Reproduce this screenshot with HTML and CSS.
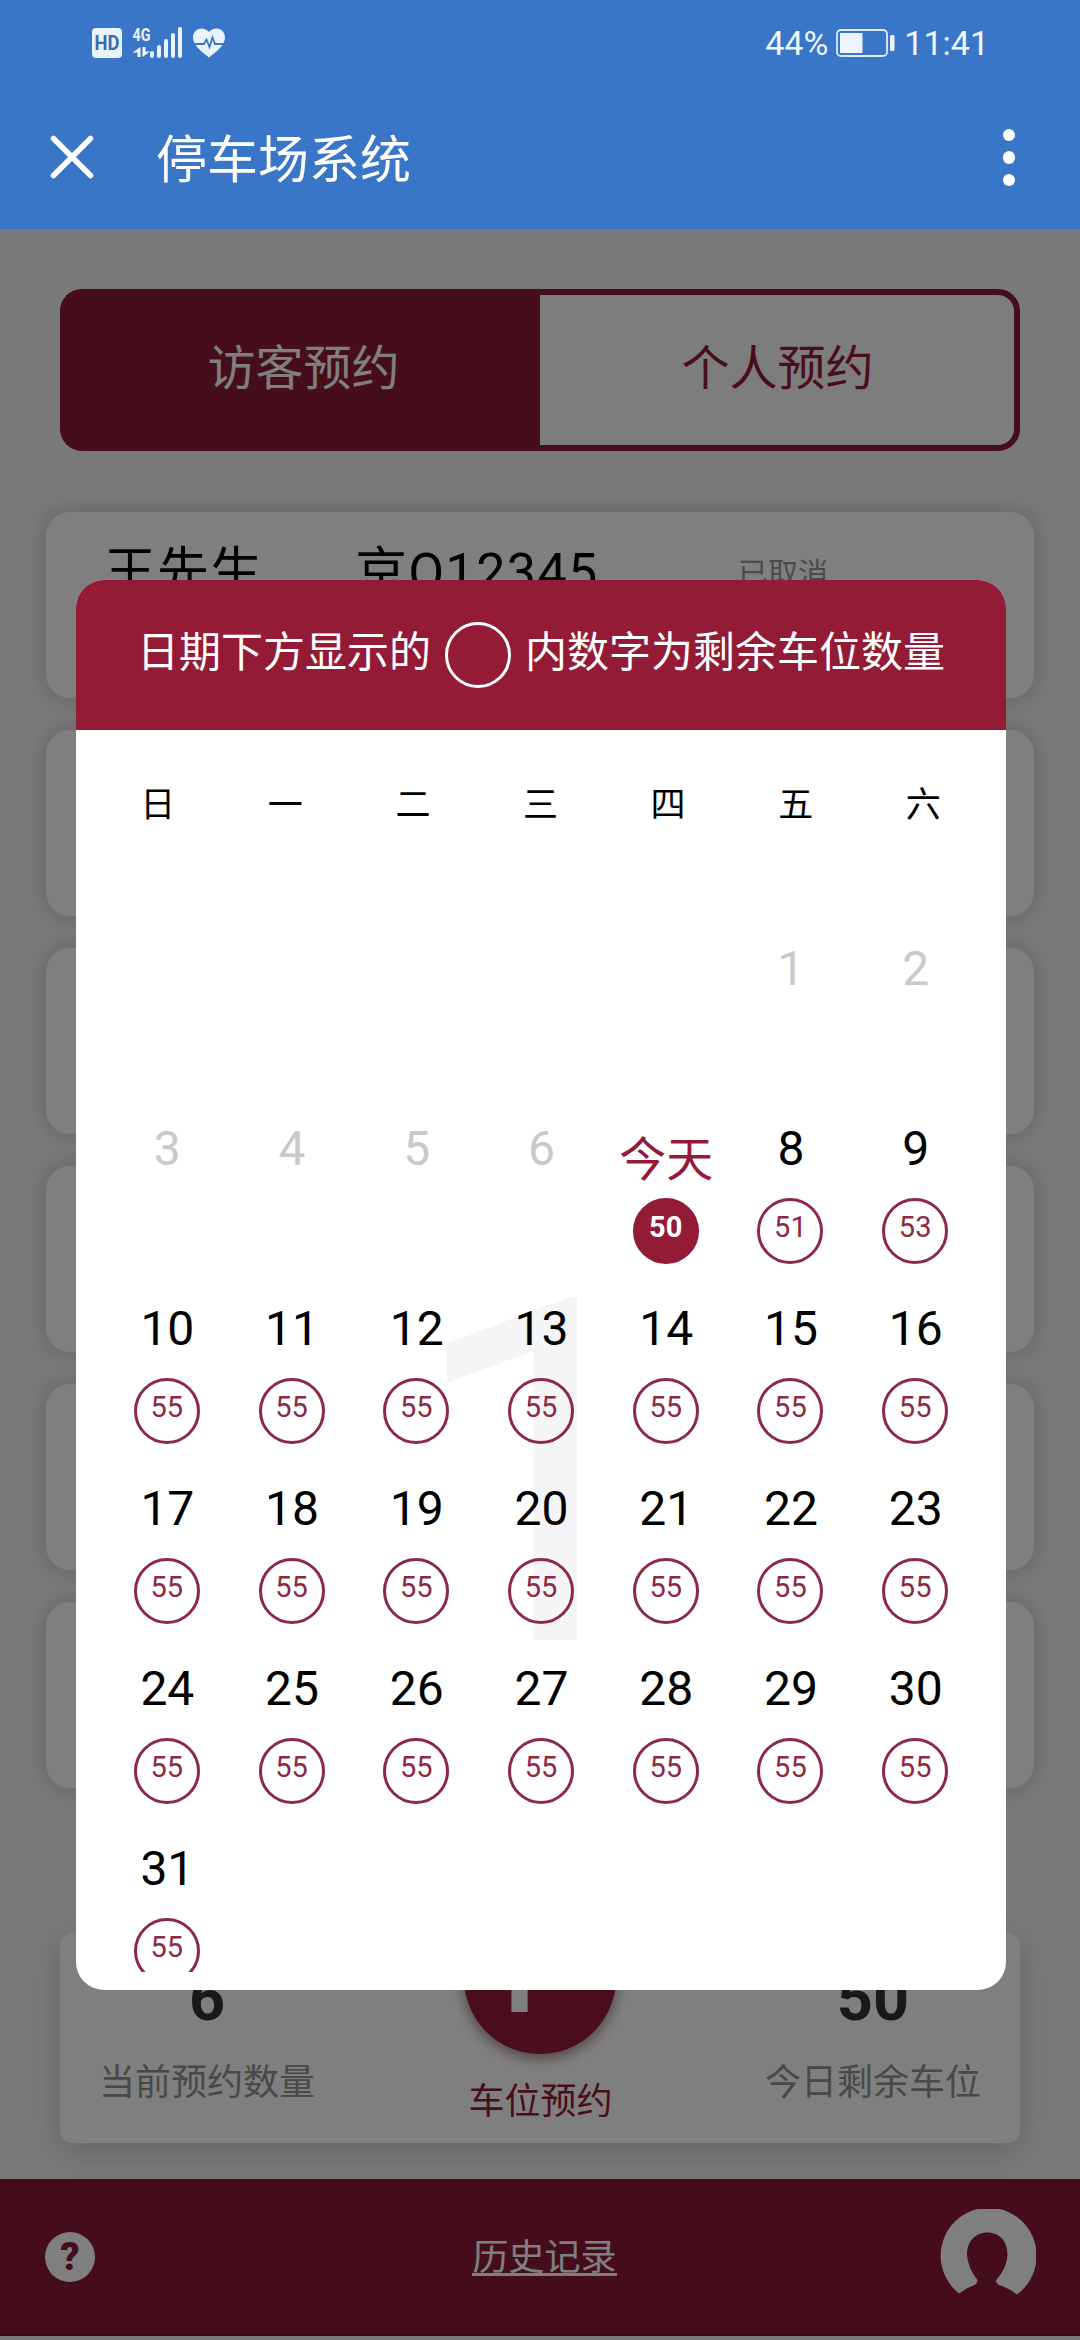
FILE: index.html
```html
<!DOCTYPE html>
<html lang="zh-CN">
<head>
<meta charset="utf-8">
<title>停车场系统</title>
<link rel="stylesheet" href="styles.css">
</head>
<body>
<header class="topbar">
  <div class="status">
    <svg class="status-icons" width="136" height="36" viewBox="0 0 136 36">
      <rect x="0" y="4" width="30" height="30" rx="4" fill="#eaf3fd"/>
      <text x="15" y="26" class="hd" text-anchor="middle" textLength="25" lengthAdjust="spacingAndGlyphs">HD</text>
      <text x="40.500" y="16.500" class="net" textLength="18" lengthAdjust="spacingAndGlyphs">4G</text>
      <path d="M48.500 33V23L40.500 28.500H45.500V33ZM50.500 23V33L58 27.500H53.500V23Z" fill="#eaf3fd"/>
      <path d="M60 32v-3M67 32V23M74 32V17M81 32V11M88 32V5" stroke="#eaf3fd" stroke-width="4" stroke-linecap="round"/>
      <path d="M117 33.500C111 28.500 101 22 101 13.500C101 4 112 1.500 117 8C122 1.500 133 4 133 13.500C133 22 123 28.500 117 33.500Z" fill="#eaf3fd"/>
      <path d="M102 20H112L114.500 15.500L117.500 23L120.500 13.500L123 20H132" fill="none" stroke="#3b76c6" stroke-width="1.800"/>
    </svg>
    <div class="status-right">
      <span>44%</span>
      <svg width="60" height="28" viewBox="0 0 60 28">
        <rect x="1" y="1" width="50" height="26" rx="4" fill="none" stroke="#dcecff" stroke-width="1.800"/>
        <rect x="4" y="4" width="22.500" height="20" fill="#eef4fd"/>
        <rect x="54" y="6" width="4.500" height="16" rx="1.500" fill="#eef4fd"/>
      </svg>
      <span>11:41</span>
    </div>
  </div>
  <div class="nav">
    <svg class="close" width="44" height="44" viewBox="0 0 44 44"><path d="M3.500 3.500L40.500 40.500M40.500 3.500L3.500 40.500" stroke="#fff" stroke-width="5.500" stroke-linecap="round"/></svg>
    <h1 class="title">停车场系统</h1>
    <div class="more"><i></i><i></i><i></i></div>
  </div>
</header>

<main class="page">
  <div class="tabs">
    <div class="tab tab-active">访客预约</div>
    <div class="tab">个人预约</div>
  </div>
  <div class="list">
    <div class="card"><span class="name">王先生</span><span class="plate">京Q12345</span><span class="state">已取消</span></div>
    <div class="card"></div>
    <div class="card"></div>
    <div class="card"></div>
    <div class="card"></div>
    <div class="card"></div>
  </div>
  <section class="summary">
    <div class="stat"><b>6</b><span>当前预约数量</span></div>
    <div class="book"><div class="book-btn">P</div><span>车位预约</span></div>
    <div class="stat"><b>50</b><span>今日剩余车位</span></div>
  </section>
  <footer class="footer">
    <div class="help">?</div>
    <a class="history">历史记录</a>
    <svg class="avatar" width="96" height="96" viewBox="0 0 96 96"><path d="M19 84.500A48 48 0 1 1 77 85.500Q69 79 59 76Q55 74 56.500 70.500Q67 59 67.500 46C67.500 32 59.500 23.500 47.500 23.500S27 32 27 46Q28 59 37 70.500Q38.500 74 34.500 76Q26 79 19 84.500Z" fill="#fff"/></svg>
  </footer>

  <div class="overlay">
    <section class="modal">
      <div class="modal-head"><span>日期下方显示的</span><i class="ring"></i><span>内数字为剩余车位数量</span></div>
      <div class="week"><span>日</span><span>一</span><span>二</span><span>三</span><span>四</span><span>五</span><span>六</span></div>
      <div class="month">
        <div class="month-mark">1</div>
        <div class="days">
          <div class="day off first">1</div>
          <div class="day off">2</div>
          <div class="day off">3</div>
          <div class="day off">4</div>
          <div class="day off">5</div>
          <div class="day off">6</div>
          <div class="day today"><span>今天</span><em>50</em></div>
          <div class="day">8<em>51</em></div>
          <div class="day">9<em>53</em></div>
          <div class="day">10<em>55</em></div>
          <div class="day">11<em>55</em></div>
          <div class="day">12<em>55</em></div>
          <div class="day">13<em>55</em></div>
          <div class="day">14<em>55</em></div>
          <div class="day">15<em>55</em></div>
          <div class="day">16<em>55</em></div>
          <div class="day">17<em>55</em></div>
          <div class="day">18<em>55</em></div>
          <div class="day">19<em>55</em></div>
          <div class="day">20<em>55</em></div>
          <div class="day">21<em>55</em></div>
          <div class="day">22<em>55</em></div>
          <div class="day">23<em>55</em></div>
          <div class="day">24<em>55</em></div>
          <div class="day">25<em>55</em></div>
          <div class="day">26<em>55</em></div>
          <div class="day">27<em>55</em></div>
          <div class="day">28<em>55</em></div>
          <div class="day">29<em>55</em></div>
          <div class="day">30<em>55</em></div>
          <div class="day">31<em>55</em></div>
        </div>
      </div>
    </section>
  </div>
</main>
</body>
</html>
```
FILE: styles.css
```css
* { box-sizing: border-box; }

body {
  margin: 0;
  width: 1080px;
  height: 2340px;
  overflow: hidden;
  display: flex;
  flex-direction: column;
  font-family: Roboto, "Noto Sans CJK SC", sans-serif;
}

/* Top bar */
.topbar {
  height: 229px;
  background: #3a76c7;
  color: #fff;
}
.status {
  height: 86px;
  padding: 0 91px 0 92px;
  display: flex;
  justify-content: space-between;
  align-items: center;
}
.hd { font: 700 20px Roboto, sans-serif; fill: #3b6cae; }
.net { font: 700 18px Roboto, sans-serif; fill: #eaf3fd; }
.status-icons { margin-bottom: 2px; }
.status-right {
  display: flex;
  align-items: center;
  gap: 8px;
  font-size: 34px;
  line-height: 40px;
  color: #eef6ff;
}
.nav {
  height: 143px;
  padding: 0 65px 0 50px;
  display: flex;
  align-items: center;
}
.close { margin-bottom: 1px; }
.title {
  flex: 1;
  margin: 7px 0 0 62px;
  font-size: 51px;
  font-weight: 400;
  line-height: 60px;
}
.more { display: flex; flex-direction: column; gap: 10px; }
.more i { width: 12.5px; height: 12.5px; border-radius: 50%; background: #fff; }

/* Page behind the popup */
.page {
  position: relative;
  flex: 1;
  display: flex;
  flex-direction: column;
  background: #f3f3f4;
}
.tabs {
  height: 162px;
  margin: 60px 60px 0;
  display: flex;
  border: 6px solid #8d1a36;
  border-radius: 22px;
  background: #fbfbfb;
}
.tab {
  flex: 1;
  display: flex;
  align-items: center;
  justify-content: center;
  padding: 0 0 13px 1px;
  font-size: 48px;
  color: #931b38;
}
.tab-active { background: #8d1a36; color: #fff; }
.list {
  margin: 61px 46px 0;
  display: flex;
  flex-direction: column;
  gap: 32px;
}
.card {
  height: 186px;
  padding: 26px 58px;
  display: flex;
  border-radius: 24px;
  background: #fff;
  box-shadow: 0 0 24px rgba(0, 0, 0, .2);
  font-size: 52px;
  line-height: 70px;
}
.name { width: 251px; letter-spacing: 1px; }
.plate { width: 383px; letter-spacing: 1.4px; }
.state { padding-top: 1px; font-size: 30px; color: #969799; }

.summary {
  height: 210px;
  margin: 145px 60px 0;
  padding: 0 38px;
  display: flex;
  justify-content: space-between;
  border-radius: 12px;
  background: #fff;
  box-shadow: 0 8px 34px rgba(0, 0, 0, .18);
}
.stat {
  width: 218px;
  padding-top: 29px;
  display: flex;
  flex-direction: column;
  align-items: center;
  color: #323233;
}
.stat b { font-size: 63px; line-height: 74px; }
.stat span { margin-top: 20px; font-size: 36px; line-height: 54px; color: #929293; }
.book { width: 160px; margin-top: -31px; display: flex; flex-direction: column; align-items: center; }
.book-btn {
  width: 152px;
  height: 152px;
  border-radius: 50%;
  background: #931b38;
  color: #fff;
  font-size: 110px;
  font-weight: 700;
  line-height: 145px;
  text-align: center;
  box-shadow: 0 4px 14px rgba(60, 0, 10, .5);
}
.book span { margin: 21px 0 0 1px; font-size: 36px; line-height: 54px; color: #931b38; white-space: nowrap; }

.footer {
  height: 157px;
  margin-top: 36px;
  padding: 0 44px 0 45px;
  display: flex;
  align-items: center;
  justify-content: space-between;
  background: #8b1a36;
  border-bottom: 2px solid #6c1028;
}
.help {
  width: 50px;
  height: 50px;
  border-radius: 50%;
  background: #fff;
  color: #8b1a36;
  font-size: 38px;
  font-weight: 900;
  line-height: 50px;
  text-align: center;
}
.history {
  margin: -4px 0 0 54px;
  height: 42px;
  font-size: 36px;
  line-height: 48px;
  color: #fff;
  border-bottom: 3px solid #fff;
}

/* Calendar popup */
.overlay {
  position: absolute;
  inset: 0;
  padding: 351px 74px 0 76px;
  background: rgba(0, 0, 0, .5);
}
.modal {
  height: 1410px;
  padding-bottom: 18px;
  display: flex;
  flex-direction: column;
  overflow: hidden;
  border-radius: 28px;
  background: #fff;
}
.modal-head {
  height: 150px;
  display: flex;
  align-items: center;
  justify-content: center;
  gap: 14px;
  background: #931b35;
  color: #fff;
  font-size: 42px;
  line-height: 60px;
  padding-bottom: 4px;
}
.ring { width: 66px; height: 66px; border: 3px solid #fff; border-radius: 50%; margin-top: 3px; }
.week {
  height: 150px;
  padding: 0 19px 7px 18px;
  display: grid;
  grid-template-columns: repeat(7, 1fr);
  align-items: center;
  text-align: center;
  font-size: 35px;
}
.month { position: relative; flex: 1; overflow: hidden; }
.month-mark {
  position: absolute;
  inset: 0;
  padding-top: 316px;
  font-size: 480px;
  line-height: 560px;
  text-align: center;
  color: #f5f5f7;
}
.days {
  position: relative;
  padding: 38px 28px 0 29px;
  display: grid;
  grid-template-columns: repeat(7, 1fr);
  grid-auto-rows: 180px;
}
.day {
  padding-top: 21px;
  display: flex;
  flex-direction: column;
  align-items: center;
  font-size: 48px;
  line-height: 60px;
  color: #000;
}
.first { grid-column-start: 6; }
.off { color: #c8c9cc; }
.day em {
  width: 66px;
  height: 66px;
  margin: 19px 1px 0 0;
  border: 3px solid #8c2a45;
  border-radius: 50%;
  font-size: 29px;
  font-style: normal;
  line-height: 53px;
  text-align: center;
  color: #8c2a45;
}
.today { color: #931b38; }
.today span { height: 60px; line-height: 81px; font-size: 47px; }
.today em { background: #931b35; border-color: #931b35; color: #fff; font-weight: 700; }
```
